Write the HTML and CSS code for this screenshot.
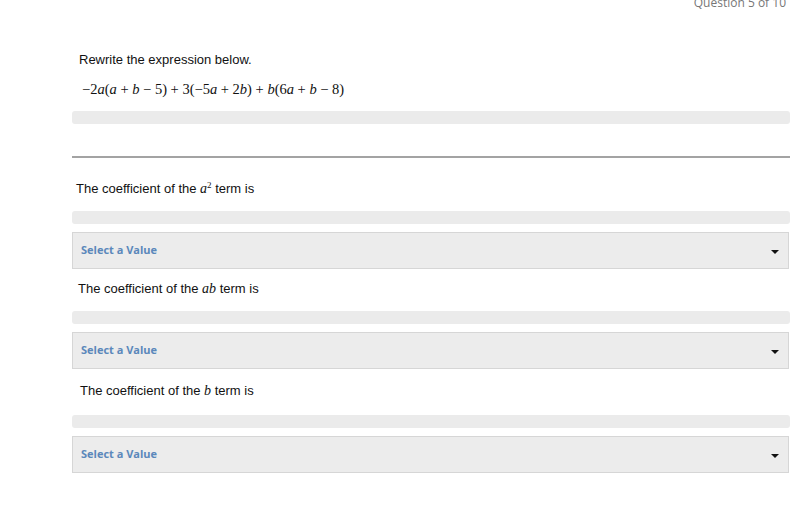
FILE: index.html
```html
<!DOCTYPE html>
<html>
<head>
<meta charset="utf-8">
<link rel="stylesheet" href="styles.css">
</head>
<body>
<div class="page">
  <div class="counter">Question 5 of 10</div>
  <div class="prompt">Rewrite the expression below.</div>
  <div class="expr">−2<i>a</i>(<i>a</i> + <i>b</i> − 5) + 3(−5<i>a</i> + 2<i>b</i>) + <i>b</i>(6<i>a</i> + <i>b</i> − 8)</div>
  <div class="bar bar-top"></div>
  <hr class="rule">
  <div class="q q1">The coefficient of the <i class="m">a</i><sup>2</sup> term is</div>
  <div class="bar"></div>
  <div class="select"><span>Select a Value</span><span class="caret"></span></div>
  <div class="q q2">The coefficient of the <i class="m">ab</i> term is</div>
  <div class="bar"></div>
  <div class="select"><span>Select a Value</span><span class="caret"></span></div>
  <div class="q q3">The coefficient of the <i class="m">b</i> term is</div>
  <div class="bar"></div>
  <div class="select"><span>Select a Value</span><span class="caret"></span></div>
</div>
</body>
</html>
```
FILE: styles.css
```css
html, body { margin: 0; padding: 0; background: #fff; }
body { font-family: "Liberation Sans", Arial, sans-serif; color: #111; }
.page { width: 718px; margin-left: 72px; }
.counter {
  font-family: "Open Sans", sans-serif; font-size: 12px; color: #777;
  text-align: right; margin-top: -6px; height: 18px; line-height: 18px; padding-right: 4px;
}
.prompt { font-size: 13px; margin-top: 40px; padding-left: 7px; line-height: 16px; }
.expr {
  font-family: "Liberation Serif", serif; font-size: 14.5px; margin-top: 13px; padding-left: 10px;
  line-height: 16px;
}
.expr i { font-style: italic; }
.bar { height: 13px; background: #ebebeb; border-radius: 3px; }
.bar-top { margin-top: 14px; }
.rule { border: 0; height: 2px; background: #a3a3a3; margin: 32px 0 0 0; }
.q { font-size: 13px; line-height: 16px; margin-bottom: 14px; }
.q1 { margin-top: 23px; padding-left: 4px; }
.q2 { margin-top: 12px; padding-left: 6px; }
.q3 { margin-top: 14px; padding-left: 8px; margin-bottom: 16px; }
.m { font-family: "Liberation Serif", serif; font-size: 14px; }
sup { font-family: "Liberation Serif", serif; font-size: 9px; vertical-align: 5px; line-height: 0; }
.select {
  margin-top: 8px; height: 37px; box-sizing: border-box;
  background: #ececec; border: 1px solid #d6d6d6;
  display: flex; align-items: center; justify-content: space-between;
  padding: 0 8px 2px 8px; width: 717px;
  font-family: "Open Sans", sans-serif; font-weight: 700; font-size: 11px; color: #5b88bb;
}
.caret {
  width: 0; height: 0; border-left: 4px solid transparent; border-right: 4px solid transparent;
  border-top: 4px solid #111; margin-top: 4px; margin-right: 1px;
}
```
